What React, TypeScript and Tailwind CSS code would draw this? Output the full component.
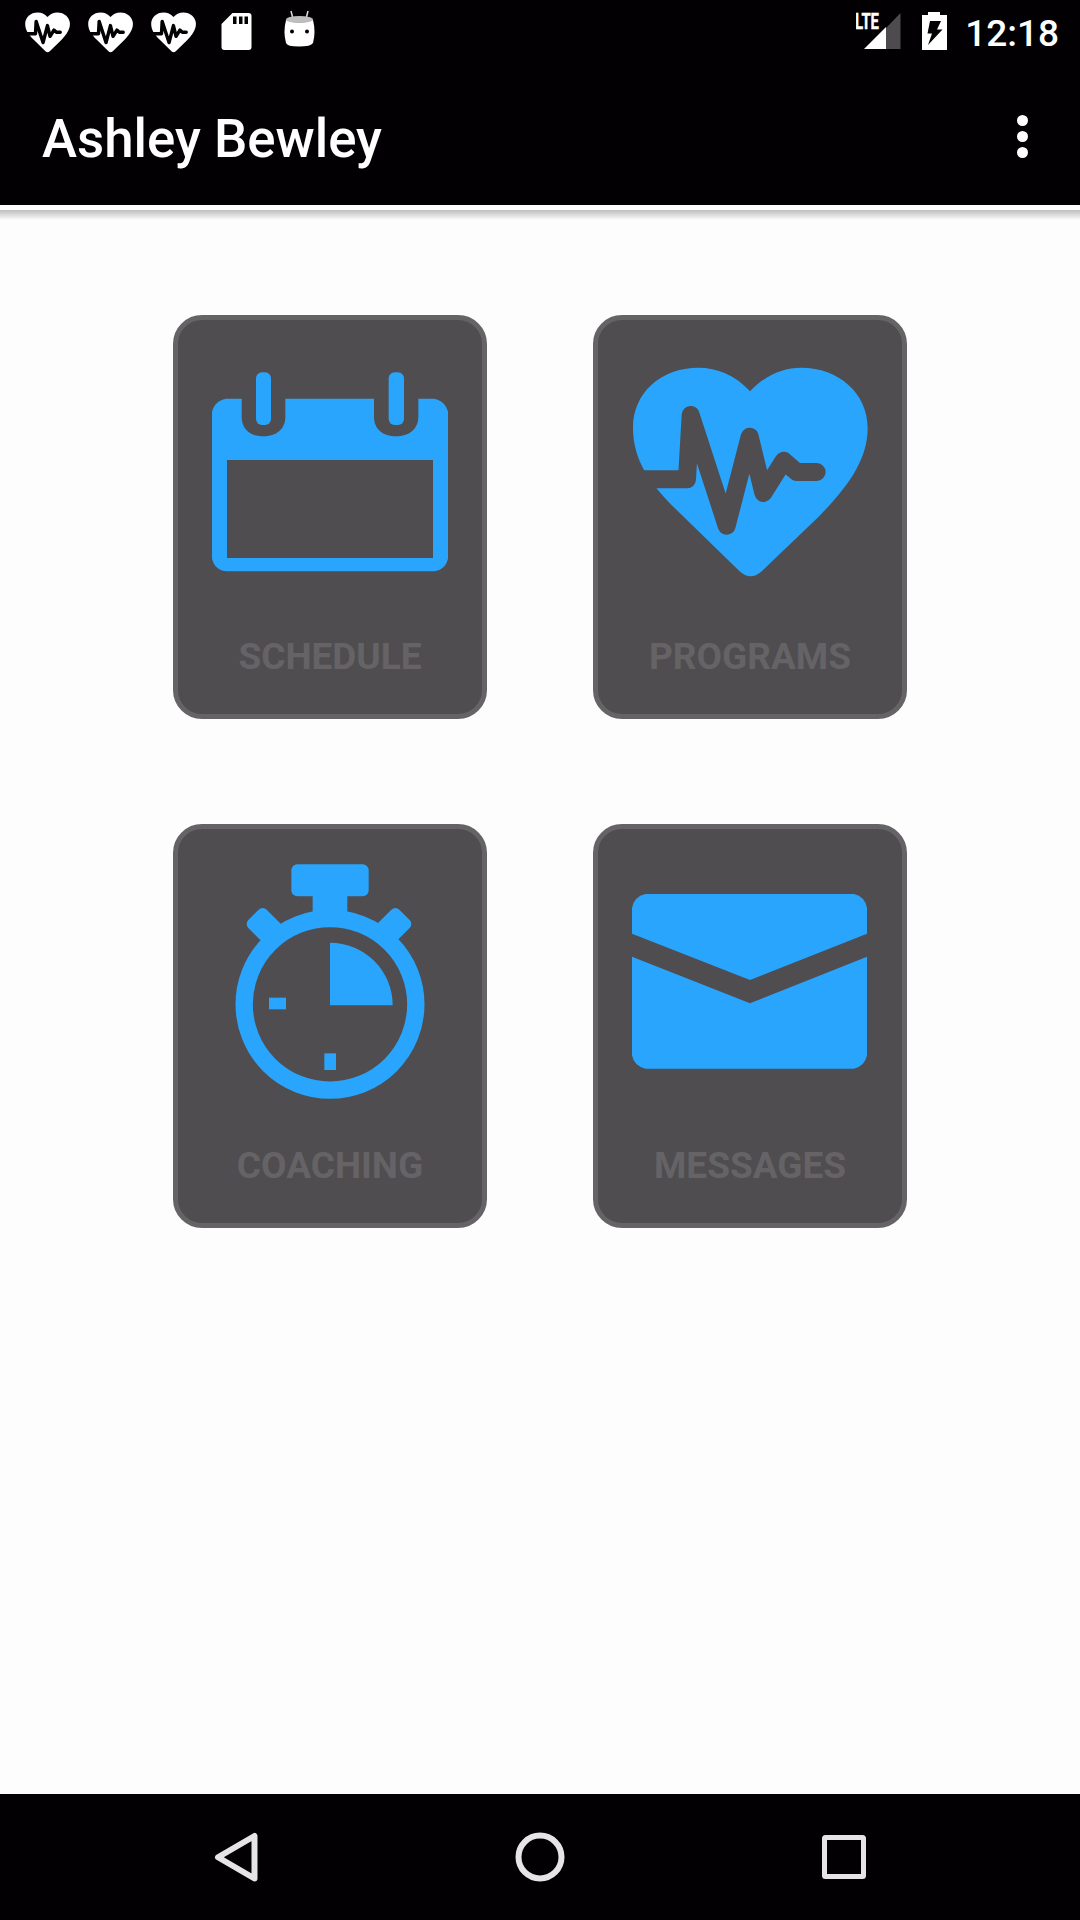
import React from 'react';

const HeartPulse: React.FC<{ className: string; line: string }> = ({ className, line }) => (
  <svg viewBox="0 0 708 708" className={className}>
    <path
      fill="currentColor"
      d="M354 109C310 60 255 38 200 38C85 38 3 115 3 218C3 318 56 388 134 465L322 648Q356 680 390 648L560 485C655 388 707 310 707 218C707 115 620 38 508 38C453 38 400 60 354 109Z"
    />
    <path
      className={line}
      fill="none"
      strokeWidth="54"
      strokeLinecap="round"
      strokeLinejoin="round"
      d="M0 373H165L176 180L284 512L353 245L394 414L455 317L494 351H554"
    />
  </svg>
);

const CalendarIcon = () => (
  <svg viewBox="0 0 708 708" className="h-[236px] w-[236px]" fill="currentColor">
    <path
      fillRule="evenodd"
      d="M42 131H89V186C89 222 115 244 154 244S220 222 220 186V131H486V186C486 222 513 244 552 244S619 222 619 186V131H666C690 137 702 148 708 170V611C702 633 690 645 666 649H42C18 645 6 633 0 611V170C6 148 18 137 42 131ZM45 315V609H663V315Z"
    />
    <rect x="132" y="52" width="45" height="158" rx="18" />
    <rect x="530" y="52" width="46" height="158" rx="18" />
  </svg>
);

const StopwatchIcon = () => (
  <svg viewBox="0 0 708 708" className="h-[236px] w-[236px]" fill="currentColor">
    <circle cx="354" cy="421" r="257.5" fill="none" stroke="currentColor" strokeWidth="52" />
    <rect x="238" y="1" width="232" height="96" rx="18" />
    <path d="M302 90H406V150H302Z" />
    <g stroke="currentColor" strokeWidth="34" strokeLinejoin="round">
      <path d="M152 149L121 180L164 223L195 192Z" />
      <path d="M550 149L581 180L538 223L507 192Z" />
    </g>
    <path d="M354 236A188 188 0 0 1 542 424H354Z" />
    <rect x="171" y="401" width="51" height="35" />
    <rect x="337" y="568" width="35" height="50" />
  </svg>
);

const EnvelopeIcon = () => (
  <svg viewBox="0 0 708 708" className="h-[236px] w-[236px]" fill="currentColor">
    <path d="M0 209V132Q6 98 40 90H666Q699 98 705 132V209L354 348Z" />
    <path d="M0 278L354 418L705 278V574Q699 606 666 614H40Q6 606 0 574Z" />
  </svg>
);

const items = [
  {
    label: 'SCHEDULE',
    icon: <CalendarIcon />,
  },
  {
    label: 'PROGRAMS',
    icon: <HeartPulse className="h-[236px] w-[236px]" line="stroke-[#4f4d4f]" />,
  },
  {
    label: 'COACHING',
    icon: <StopwatchIcon />,
  },
  {
    label: 'MESSAGES',
    icon: <EnvelopeIcon />,
  },
];

const StatusBar = () => (
  <div className="flex h-[63px] items-center justify-between bg-[#020003] pr-[21px] pl-4 text-white">
    <div className="flex items-center">
      {[0, 1, 2].map((n) => (
        <div key={n} className="flex h-[63px] w-[63px] items-center justify-center pt-[2px]">
          <HeartPulse className="h-[45px] w-[45px]" line="stroke-[#020003]" />
        </div>
      ))}
      <svg viewBox="0 0 63 63" className="h-[63px] w-[63px]">
        <path fill="#fff" d="M27.500 13H43.500Q46.500 13 46.500 16V47Q46.500 50 43.500 50H19.500Q16.500 50 16.500 47V24Z" />
        <path fill="#020003" d="M28 16.500h3.500v7.500H28zM34 16.500h3.500v7.500H34zM39.500 16.500h3.500v7.500H39.500z" />
      </svg>
      <svg viewBox="0 0 63 63" className="h-[63px] w-[63px]">
        <path stroke="#ddd" strokeWidth="1.500" d="M23 11L25 19M40 11L38 19" />
        <path fill="#fff" d="M18 20Q31 25 45 20Q48 32 45 43Q43 46.500 31 46.500T18 43Q15 32 18 20Z" />
        <ellipse cx="31.500" cy="19.500" rx="13.500" ry="3.500" fill="#bdbdbd" />
        <circle cx="24" cy="31.500" r="2" fill="#020003" />
        <circle cx="39" cy="31.500" r="2" fill="#020003" />
      </svg>
    </div>
    <div className="flex items-center">
      <svg viewBox="0 0 48 63" className="h-[63px] w-12">
        <path fill="#4d4b4e" d="M30 28L44.500 13V49H30Z" />
        <path fill="#fff" d="M8 49L30 27V49Z" />
        <text
          x="-1"
          y="29"
          fill="#fff"
          stroke="#fff"
          strokeWidth="0.4"
          textLength="24"
          lengthAdjust="spacingAndGlyphs"
          className="font-['Roboto',sans-serif] text-[22px] font-bold"
        >
          LTE
        </text>
      </svg>
      <svg viewBox="0 0 26 63" className="ml-[17px] h-[63px] w-[26px]">
        <path fill="#fff" d="M7 12H19V15H26V50H1V15H7Z" />
        <path fill="#020003" d="M9 21H20L16 29.500H21.500L7 45L11 33.500H6.500Z" />
      </svg>
      <span className="ml-[18px] pt-[3px] text-[37px] leading-none font-medium">12:18</span>
    </div>
  </div>
);

const NavBar = () => (
  <div className="flex h-[126px] items-center justify-center gap-[240px] bg-[#020003] text-[#e7e4e7]">
    <svg viewBox="0 0 64 64" className="h-16 w-16" fill="none" stroke="currentColor" strokeWidth="6" strokeLinejoin="round">
      <path d="M50.500 11V53.500L14 32.250Z" />
    </svg>
    <svg viewBox="0 0 64 64" className="h-16 w-16" fill="none" stroke="currentColor" strokeWidth="6">
      <circle cx="32" cy="32" r="21.500" />
    </svg>
    <svg viewBox="0 0 64 64" className="h-16 w-16" fill="none" stroke="currentColor" strokeWidth="5" strokeLinejoin="round">
      <rect x="12.500" y="12.500" width="39" height="39" rx="1" />
    </svg>
  </div>
);

const App: React.FC = () => {
  return (
    <div className="flex h-[1920px] w-[1080px] flex-col bg-[#fdfdfd] font-['Roboto',sans-serif]">
      <StatusBar />
      <header className="flex h-[142px] items-center justify-between bg-[#020003] pt-[5px] pr-[52px] pl-[42px] text-white">
        <h1 className="pt-[5px] text-[52.8px] leading-none font-medium">Ashley Bewley</h1>
        <button className="flex flex-col gap-[5px]">
          <span className="h-[11px] w-[11px] rounded-full bg-white" />
          <span className="h-[11px] w-[11px] rounded-full bg-white" />
          <span className="h-[11px] w-[11px] rounded-full bg-white" />
        </button>
      </header>
      <div className="h-[5px] bg-white" />
      <div className="h-[10px] bg-linear-to-b from-[#bfbdbf] to-[#fdfdfd]" />

      <main className="flex-1 pt-[95px]">
        <div className="grid grid-cols-[314px_314px] justify-center gap-x-[106px] gap-y-[105px]">
          {items.map((item) => (
            <button
              key={item.label}
              className="flex h-[404px] flex-col items-center rounded-[29px] border-[5px] border-[#656366] bg-[#4f4d4f] pt-[35px] text-[#29a5fd]"
            >
              {item.icon}
              <span className="mt-[44px] text-[37px] leading-[43px] font-bold text-[#656366]">{item.label}</span>
            </button>
          ))}
        </div>
      </main>

      <NavBar />
    </div>
  );
};

export default App;
